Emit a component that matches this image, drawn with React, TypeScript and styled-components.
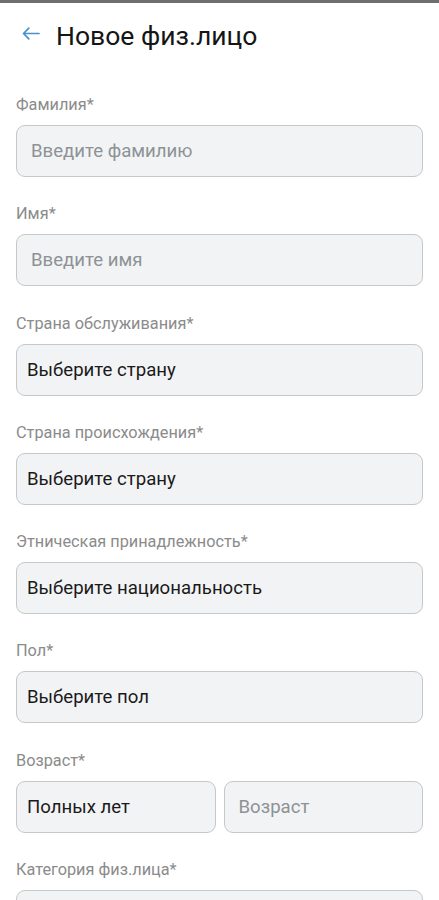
import React from "react";
import styled, { createGlobalStyle } from "styled-components";

const Global = createGlobalStyle`
  html, body { margin: 0; padding: 0; background: #ffffff; }
  body { font-family: Roboto, "Noto Sans", sans-serif; }
  * { box-sizing: border-box; }
`;

const Page = styled.div`
  width: 439px;
  min-height: 900px;
  background: #fff;
  border-top: 3px solid #6f6f6f;
`;

const Header = styled.div`
  display: flex;
  align-items: center;
  height: 66px;
  padding: 0 0 2px 21px;
  gap: 15px;
`;

const BackButton = styled.button`
  border: 0;
  background: none;
  padding: 0;
  width: 20px;
  height: 20px;
  display: flex;
  align-items: center;
  justify-content: center;
  color: #4a8fcf;
  margin-top: -3px;
`;

const Title = styled.h1`
  margin: 0;
  font-size: 26.5px;
  font-weight: 400;
  color: #151515;
`;

const Form = styled.div`
  display: flex;
  flex-direction: column;
  padding: 26px 16px 0;
  gap: 27.3px;
`;

const Field = styled.div`
  display: flex;
  flex-direction: column;
  gap: 10px;
`;

const Label = styled.div`
  font-size: 16.3px;
  color: #8b8b8b;
  line-height: 20px;
`;

const Row = styled.div`
  display: grid;
  grid-template-columns: 1fr 1fr;
  gap: 8px;
`;

const Box = styled.div<{ $placeholder?: boolean }>`
  height: 52px;
  border: 1px solid #c5c7c9;
  border-radius: 9px;
  background: #f2f3f5;
  display: flex;
  align-items: center;
  padding-left: ${(p) => (p.$placeholder ? "14px" : "10px")};
  font-size: 18.6px;
  color: ${(p) => (p.$placeholder ? "#8d9296" : "#1a1a1a")};
`;

const fields: { label: string; value: string; placeholder?: boolean }[] = [
  { label: "Фамилия*", value: "Введите фамилию", placeholder: true },
  { label: "Имя*", value: "Введите имя", placeholder: true },
  { label: "Страна обслуживания*", value: "Выберите страну" },
  { label: "Страна происхождения*", value: "Выберите страну" },
  { label: "Этническая принадлежность*", value: "Выберите национальность" },
  { label: "Пол*", value: "Выберите пол" },
];

export default function App() {
  return (
    <>
      <Global />
      <Page>
        <Header>
          <BackButton aria-label="Назад">
            <svg width="18" height="13" viewBox="0 0 18 13" fill="none">
              <path
                d="M17 6.5H1.5M6.8 1.2L1.5 6.5l5.3 5.3"
                stroke="currentColor"
                strokeWidth="1.7"
                strokeLinecap="round"
                strokeLinejoin="round"
              />
            </svg>
          </BackButton>
          <Title>Новое физ.лицо</Title>
        </Header>
        <Form>
          {fields.map((f, i) => (
            <Field key={i}>
              <Label>{f.label}</Label>
              <Box $placeholder={f.placeholder}>{f.value}</Box>
            </Field>
          ))}
          <Field>
            <Label>Возраст*</Label>
            <Row>
              <Box>Полных лет</Box>
              <Box $placeholder>Возраст</Box>
            </Row>
          </Field>
          <Field>
            <Label>Категория физ.лица*</Label>
            <Box />
          </Field>
        </Form>
      </Page>
    </>
  );
}
